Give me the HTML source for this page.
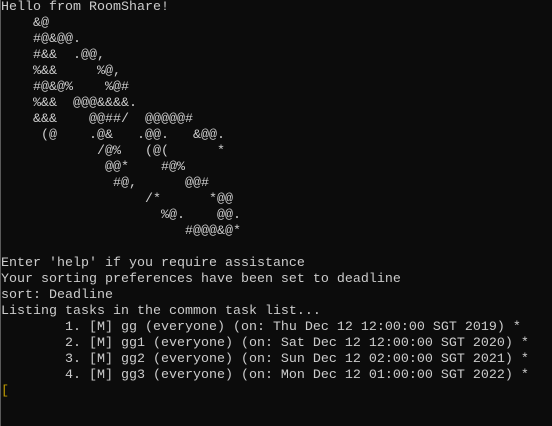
<!DOCTYPE html>
<html><head><meta charset="utf-8"><style>
html,body{margin:0;padding:0;background:#0c0c0c;width:552px;height:426px;overflow:hidden}
.b{position:absolute;left:0;top:0;width:1px;height:426px;background:#5a5a5a}
pre{position:absolute;left:1px;top:0;margin:0;font-family:"Liberation Mono",monospace;font-size:13.33px;line-height:16px;color:#cccccc;white-space:pre}
.y{color:#c19c00}
</style></head><body><div class="b"></div><pre>Hello from RoomShare!
    &amp;@
    #@&amp;@@.
    #&amp;&amp;  .@@,
    %&amp;&amp;     %@,
    #@&amp;@%    %@#
    %&amp;&amp;  @@@&amp;&amp;&amp;&amp;.
    &amp;&amp;&amp;    @@##/  @@@@@#
     (@    .@&amp;   .@@.   &amp;@@.
            /@%   (@(      *
             @@*    #@%
              #@,      @@#
                  /*      *@@
                    %@.    @@.
                       #@@@&amp;@*

Enter 'help' if you require assistance
Your sorting preferences have been set to deadline
sort: Deadline
Listing tasks in the common task list...
        1. [M] gg (everyone) (on: Thu Dec 12 12:00:00 SGT 2019) *
        2. [M] gg1 (everyone) (on: Sat Dec 12 12:00:00 SGT 2020) *
        3. [M] gg2 (everyone) (on: Sun Dec 12 02:00:00 SGT 2021) *
        4. [M] gg3 (everyone) (on: Mon Dec 12 01:00:00 SGT 2022) *
<span class="y">[</span></pre></body></html>
